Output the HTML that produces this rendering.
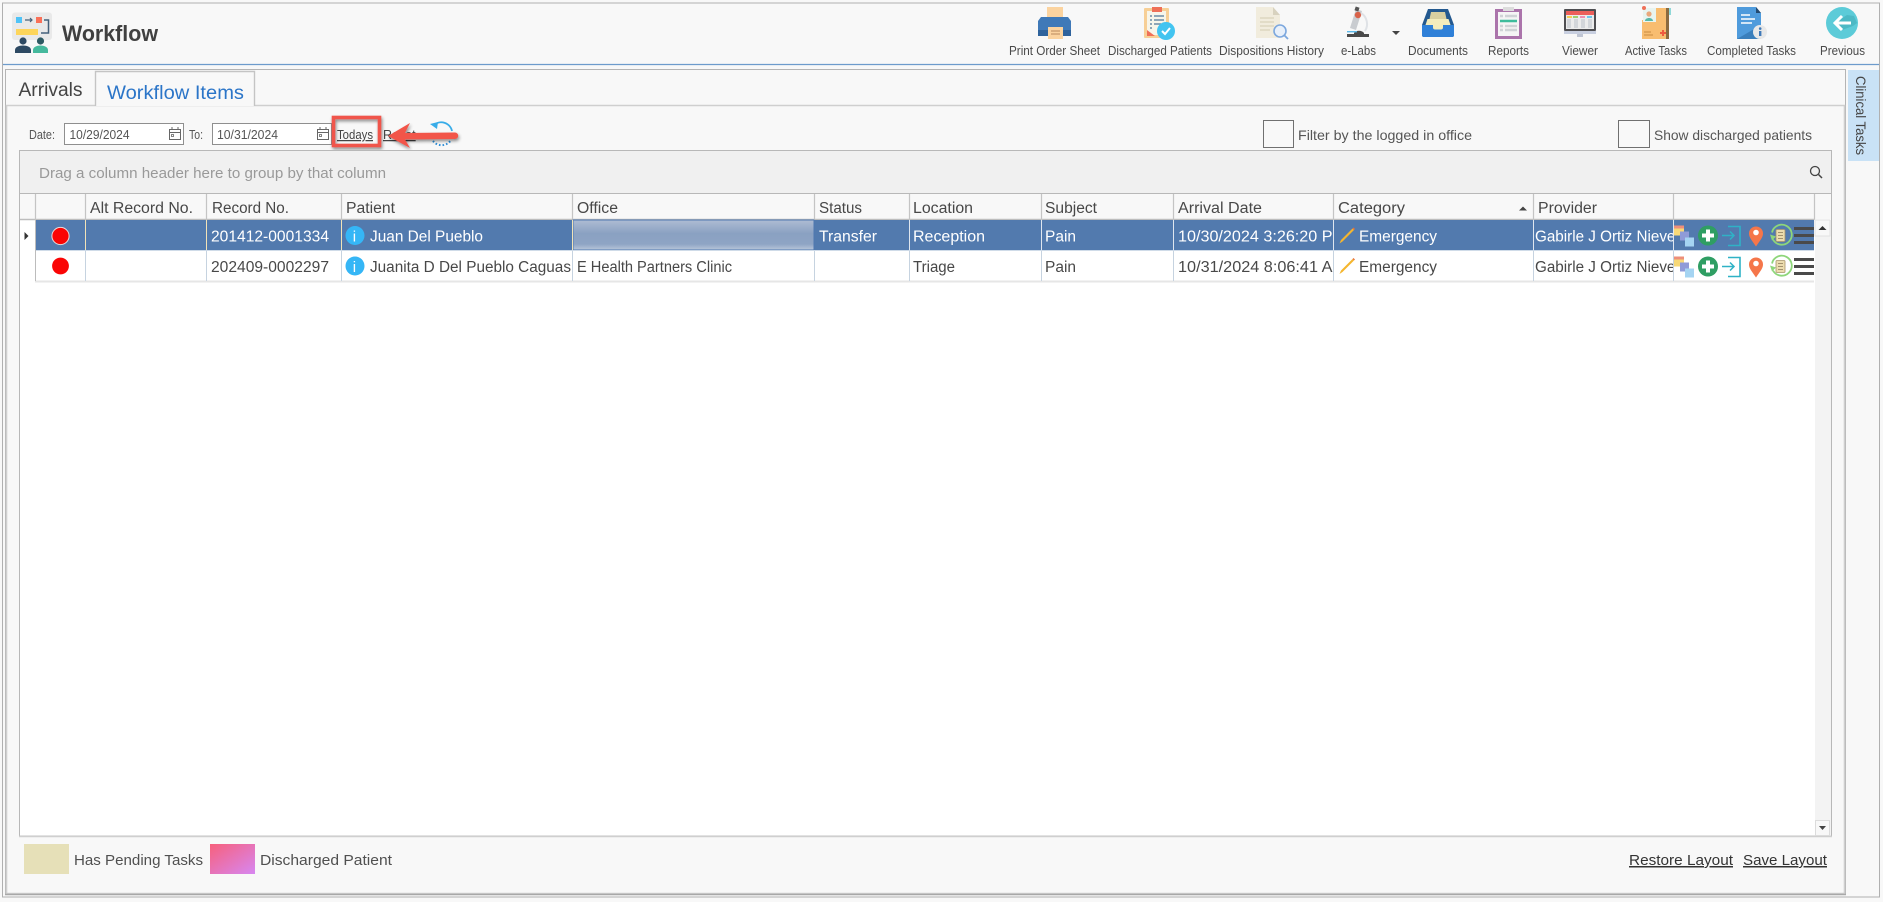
<!DOCTYPE html>
<html><head><meta charset="utf-8"><title>Workflow</title>
<style>
html,body{margin:0;padding:0;background:#f8f8f8;width:1883px;height:902px;overflow:hidden}
svg{display:block}
text{font-family:"Liberation Sans",sans-serif;fill:#444}
.tb{font-size:12.5px;fill:#4a4a4a}
.f{font-size:12.5px;fill:#555}
.c{font-size:14px;fill:#555}
.h{font-size:15.5px;fill:#484848}
.r{font-size:15.5px;fill:#484848}
.w{font-size:15.5px;fill:#fff}
.l{font-size:15px;fill:#505050}
</style></head><body>
<svg width="1883" height="902" viewBox="0 0 1883 902" xmlns="http://www.w3.org/2000/svg">
<defs>
<linearGradient id="pink" x1="0" y1="0" x2="1" y2="1"><stop offset="0" stop-color="#f7607c"/><stop offset="1" stop-color="#d787f2"/></linearGradient>
<linearGradient id="off" x1="0" y1="0" x2="0" y2="1"><stop offset="0" stop-color="#aebcd3"/><stop offset=".45" stop-color="#8aa1c2"/><stop offset=".8" stop-color="#8ea4c4"/><stop offset="1" stop-color="#b9c6da"/></linearGradient>
<filter id="sh" x="-20%" y="-40%" width="140%" height="200%"><feDropShadow dx="1" dy="2" stdDeviation="1.5" flood-color="#000" flood-opacity=".45"/></filter>
<clipPath id="cArr"><rect x="1174" y="215" width="159" height="70"/></clipPath>
<clipPath id="cPro"><rect x="1534" y="215" width="139" height="70"/></clipPath>
<g id="acts">
 <rect x="1674" y="-10" width="10" height="10" fill="#f7d978"/><rect x="1674" y="-10" width="10" height="3" fill="#ee8f7a"/>
 <rect x="1680" y="-4" width="9" height="9" fill="#8f9bd8"/><rect x="1685" y="2" width="9" height="9" fill="#a5d4f2"/>
 <circle cx="1708" cy="0" r="10" fill="#2f9e63"/><path d="M1708 -6v12M1702 0h12" stroke="#fff" stroke-width="4"/>
 <path d="M1728 -9h12v19h-12" fill="none" stroke="#2fb2c6" stroke-width="1.6"/><path d="M1722 0h12M1730 -4l4 4-4 4" fill="none" stroke="#2fb2c6" stroke-width="1.5"/>
 <path d="M1756 11c-4-6-7-9-7-13a7 7 0 0 1 14 0c0 4-3 7-7 13z" fill="#f5764a"/><circle cx="1756" cy="-3" r="2.8" fill="#fff"/>
 <path d="M1773 4a10 10 0 1 0 -1-7" fill="none" stroke="#8ed67a" stroke-width="1.8"/><path d="M1770 -1l2 6 4-4z" fill="#8ed67a"/>
 <rect x="1776" y="-6" width="9" height="12" rx="1" fill="#ecdcae" stroke="#a8946a" stroke-width=".8"/><path d="M1778 -3h5M1778 0h5M1778 3h5" stroke="#8a7a5a" stroke-width=".8"/>
 <path d="M1794 -7h20M1794 0h20M1794 7h20" stroke="#4a4a4a" stroke-width="3"/>
</g>
<g id="cal"><rect x=".5" y="2.5" width="11" height="10" fill="none" stroke="#666"/><path d="M0 5.5h12M3 0v3M9 0v3" stroke="#666"/><rect x="2.5" y="7.5" width="2" height="2" fill="none" stroke="#666" stroke-width=".8"/></g>
</defs>

<rect width="1883" height="902" fill="#f8f8f8"/>
<!-- outer frame -->
<path d="M2.5 3H1879.5V897H2.5Z" fill="none" stroke="#b0b0b0"/>
<path d="M3 64.5H1879" stroke="#6d9bcc" stroke-width="1.2"/>

<!-- logo -->
<rect x="12" y="12.500" width="40" height="27.500" rx="3" fill="#e9e9e9"/>
<rect x="16" y="17" width="6" height="6" fill="#4fc3f7"/><rect x="36" y="17" width="6" height="6" fill="#f97058"/>
<path d="M25 20h7M30 18l2 2-2 2" stroke="#44607a" stroke-width="1.2" fill="none"/>
<rect x="16" y="29" width="22" height="6" fill="#fdd55a"/>
<path d="M44 20h4.500v13H41" stroke="#44607a" stroke-width="1.500" fill="none"/>
<circle cx="23" cy="41" r="3.600" fill="#2e4a63"/><path d="M15 53v-3c0-3 4-4.500 8-4.500s8 1.500 8 4.500v3z" fill="#2e4a63"/>
<circle cx="40.500" cy="41" r="3.600" fill="#2e5a63"/><path d="M33 53v-3c0-3 4-4.500 7.500-4.500s7.500 1.500 7.500 4.500v3z" fill="#46b99d"/>
<text x="62" y="41" font-size="22" font-weight="bold" style="fill:#404040" textLength="96" lengthAdjust="spacingAndGlyphs">Workflow</text>

<!-- printer -->
<rect x="1047" y="7" width="16" height="13" fill="#fbd39f"/>
<path d="M1041 17h27l3 4v13a2 2 0 0 1-2 2h-29a2 2 0 0 1-2-2V21z" fill="#3f79b8"/><rect x="1038" y="30" width="33" height="6" fill="#2f639c"/>
<rect x="1048" y="27" width="15" height="12" fill="#fbd39f"/><path d="M1051 31h9M1051 34h9" stroke="#b98a5c"/>
<!-- discharged -->
<rect x="1144" y="8" width="25" height="30" rx="1" fill="#f7cf96"/><rect x="1147" y="11" width="19" height="24" fill="#f7f5ea"/>
<rect x="1152" y="7" width="10" height="5" fill="#ef7058"/>
<path d="M1150 16h2M1154 16h10M1150 20h2M1154 20h10M1150 24h2M1154 24h7M1150 28h2" stroke="#6d8ca6" stroke-width="1.6"/>
<path d="M1147 30l8 6h-8z" fill="#ef7058"/>
<circle cx="1166" cy="31" r="9" fill="#43c4f0"/><path d="M1162 31l3 3 5-6" stroke="#fff" stroke-width="2" fill="none"/>
<!-- dispositions -->
<path d="M1256 7h17l7 8v23h-24z" fill="#f1ecdd"/><path d="M1273 7l7 8h-7z" fill="#d8d2bf"/>
<path d="M1260 18h14M1260 22h14M1260 26h14M1260 30h10" stroke="#ddd6c0" stroke-width="1.4"/>
<circle cx="1280" cy="31" r="6" fill="#e8f0fa" stroke="#7da8de" stroke-width="1.6"/><path d="M1284 35l4 4" stroke="#7da8de" stroke-width="1.8"/>
<!-- microscope -->
<path d="M1356 9l6 2-6 19-6-2z" fill="#c9ccd0"/><rect x="1355" y="7" width="4" height="4" fill="#555" transform="rotate(18 1357 9)"/><circle cx="1358" cy="15" r="3.200" fill="#d9634a"/>
<path d="M1361 13a13 13 0 0 1 4 18" fill="none" stroke="#dfe2e6" stroke-width="2"/>
<path d="M1354 33c2-3 8-3 10 0v1h-10z" fill="#4a4a4a"/>
<rect x="1347" y="31" width="10" height="1.400" fill="#5bb8e8"/><rect x="1347" y="34" width="22" height="3" fill="#4a4a4a"/>
<path d="M1392 31h8l-4 4z" fill="#444"/>
<!-- documents -->
<path d="M1428 9h20l6 16v10a2 2 0 0 1-2 2h-28a2 2 0 0 1-2-2V25z" fill="#24598f"/>
<path d="M1431 12h14l1.500 7h-17z" fill="#d8cfa0"/>
<path d="M1427.500 19h21l2 6h-25z" fill="#f3ecbc"/>
<path d="M1422 25h11v2.500a2 2 0 0 0 2 2h6a2 2 0 0 0 2-2V25h11v10a2 2 0 0 1-2 2h-28a2 2 0 0 1-2-2z" fill="#2f80d8"/>
<path d="M1433 25h10v2.500a2 2 0 0 1-2 2h-6a2 2 0 0 1-2-2z" fill="#f3ecbc"/>
<!-- reports -->
<rect x="1495" y="9" width="27" height="30" fill="#ab74ab"/><rect x="1498" y="12" width="21" height="24" fill="#f5f5f5"/>
<rect x="1503" y="7" width="11" height="4" fill="#dcdcdc"/>
<path d="M1500 16h3M1505 16h12M1500 30h3M1505 30h12M1500 26h3" stroke="#cfd3d6" stroke-width="2.4"/><path d="M1505 26h12" stroke="#cfd3d6" stroke-width="2.4"/>
<path d="M1500 21h17" stroke="#3fbc9c" stroke-width="2.6"/>
<!-- viewer -->
<rect x="1564" y="9" width="32" height="22" rx="1" fill="#4f4f52"/><rect x="1566" y="11" width="28" height="18" fill="#ececec"/>
<rect x="1566" y="11" width="28" height="4" fill="#ec5f5a"/><rect x="1567" y="16" width="5" height="2" fill="#f6cf55"/><rect x="1573" y="16" width="5" height="2" fill="#9fd06e"/><rect x="1580" y="16" width="5" height="2" fill="#ee8fb0"/><rect x="1587" y="16" width="5" height="2" fill="#6fc7ea"/>
<path d="M1569 19v9M1576 19v9M1583 19v9M1590 19v9" stroke="#d3d6da" stroke-width="4"/>
<rect x="1564" y="31" width="32" height="3" fill="#c8cfe0"/><rect x="1577" y="34" width="6" height="3" fill="#c0c6d4"/>
<!-- active tasks -->
<path d="M1642 20h25v19h-25z" fill="#f8bd70"/><path d="M1656 8h11v14h-11z" fill="#f8bd70"/><rect x="1666" y="8" width="3" height="31" fill="#8a6a40"/><rect x="1669" y="8" width="2" height="7" fill="#8fd8d8"/>
<rect x="1643" y="8" width="13" height="14" fill="#e8f4f0"/><circle cx="1649" cy="14" r="2.6" fill="#eaa87c"/><path d="M1645 21c0-4 8-4 8 0z" fill="#58b8a8"/><circle cx="1644" cy="8" r="2" fill="#ef7058"/>
<path d="M1660 33h6M1663 30v6" stroke="#ef5a3e" stroke-width="2"/><path d="M1644 32h7M1644 35h9" stroke="#c98a40"/>
<!-- completed -->
<path d="M1737 7h19l5 6v26h-24z" fill="#4f9bdc"/><path d="M1756 7l5 6h-5z" fill="#244a70"/><path d="M1737 39l24-14v14z" fill="#3a7fbc"/>
<path d="M1741 15h9M1741 19h14M1741 23h11" stroke="#fff" stroke-width="1.5"/>
<circle cx="1760" cy="32" r="7" fill="#e8e8e8"/><rect x="1759" y="31" width="2.4" height="5" fill="#3f79b8"/><circle cx="1760.2" cy="28.6" r="1.3" fill="#3f79b8"/>
<!-- previous -->
<circle cx="1842" cy="23" r="16" fill="#5ccbd8"/><path d="M1835 23l7 7 11-4 4-3-3-7-7-1z" fill="#49b4c0" opacity=".8"/>
<path d="M1851 23h-16M1842 16l-7 7 7 7" stroke="#fff" stroke-width="3" fill="none"/>

<text class="tb" x="1009" y="55" textLength="91" lengthAdjust="spacingAndGlyphs">Print Order Sheet</text>
<text class="tb" x="1108" y="55" textLength="104" lengthAdjust="spacingAndGlyphs">Discharged Patients</text>
<text class="tb" x="1219" y="55" textLength="105" lengthAdjust="spacingAndGlyphs">Dispositions History</text>
<text class="tb" x="1341" y="55" textLength="35" lengthAdjust="spacingAndGlyphs">e-Labs</text>
<text class="tb" x="1408" y="55" textLength="60" lengthAdjust="spacingAndGlyphs">Documents</text>
<text class="tb" x="1488" y="55" textLength="41" lengthAdjust="spacingAndGlyphs">Reports</text>
<text class="tb" x="1562" y="55" textLength="36" lengthAdjust="spacingAndGlyphs">Viewer</text>
<text class="tb" x="1625" y="55" textLength="62" lengthAdjust="spacingAndGlyphs">Active Tasks</text>
<text class="tb" x="1707" y="55" textLength="89" lengthAdjust="spacingAndGlyphs">Completed Tasks</text>
<text class="tb" x="1820" y="55" textLength="45" lengthAdjust="spacingAndGlyphs">Previous</text>

<!-- main panel -->
<path d="M5.5 894V69.5H1845.5V894Z" fill="#f8f8f8" stroke="#b4b4b4"/>
<path d="M6.5 893.5V105.5H1844.5V893.5Z" fill="#f8f8f8" stroke="#cfcfcf" stroke-width="1.6"/>
<path d="M95.5 106V71.5H254.5V106" fill="#f8f8f8" stroke="#c4c4c4" stroke-width="1.4"/>
<path d="M5 894.5H1846" stroke="#a8a8a8" stroke-width="1.6"/>
<text x="18.5" y="96" font-size="19" textLength="64" lengthAdjust="spacingAndGlyphs">Arrivals</text>
<text x="107" y="99" font-size="19" style="fill:#2b75c8" textLength="137" lengthAdjust="spacingAndGlyphs">Workflow Items</text>

<!-- clinical tab -->
<rect x="1848" y="70" width="31" height="91" fill="#c9e2f6"/>
<text transform="translate(1856 76) rotate(90)" font-size="14" textLength="79" lengthAdjust="spacingAndGlyphs">Clinical Tasks</text>

<!-- filter bar -->
<text class="f" x="29" y="139" textLength="26" lengthAdjust="spacingAndGlyphs">Date:</text>
<rect x="64.5" y="123.5" width="119" height="21" fill="#fff" stroke="#8f8f8f"/>
<text class="f" x="69.5" y="139" textLength="60" lengthAdjust="spacingAndGlyphs">10/29/2024</text>
<use href="#cal" x="169" y="127"/>
<text class="f" x="189" y="139" textLength="14" lengthAdjust="spacingAndGlyphs">To:</text>
<rect x="212.5" y="123.5" width="119" height="21" fill="#fff" stroke="#8f8f8f"/>
<text class="f" x="217" y="139" textLength="61" lengthAdjust="spacingAndGlyphs">10/31/2024</text>
<use href="#cal" x="317" y="127"/>
<text class="f" x="337" y="139" style="fill:#444" text-decoration="underline" textLength="36" lengthAdjust="spacingAndGlyphs">Todays</text>
<text class="f" x="383" y="139" style="fill:#444" text-decoration="underline">Reset</text>
<rect x="333.5" y="117.5" width="46" height="28" fill="none" stroke="#f0544c" stroke-width="3.6" filter="url(#sh)"/>
<path d="M434 125a11 11 0 0 1 18 6" fill="none" stroke="#38ace8" stroke-width="1.8"/><path d="M430 124l8-2-1 7z" fill="#38ace8"/>
<path d="M433 141a11 11 0 0 0 18-1" fill="none" stroke="#2f8fd8" stroke-width="2" stroke-dasharray="1.6 2"/>
<path d="M388 136l22-13-5 10 50-.5a3 3 0 0 1 0 6.500l-50 .5 5 8.500z" fill="#f2544a" filter="url(#sh)"/>

<rect x="1263.5" y="120.5" width="30" height="27" fill="#f8f8f8" stroke="#707070"/>
<text class="c" x="1298" y="140" textLength="174" lengthAdjust="spacingAndGlyphs">Filter by the logged in office</text>
<rect x="1618.5" y="120.5" width="31" height="27" fill="#f8f8f8" stroke="#707070"/>
<text class="c" x="1654" y="140" textLength="158" lengthAdjust="spacingAndGlyphs">Show discharged patients</text>

<!-- grid -->
<rect x="19.5" y="150.5" width="1812" height="685.5" fill="#fff" stroke="#b8b8b8"/>
<path d="M19 836.5H1832" stroke="#cfcfcf" stroke-width="1.6"/>
<rect x="20" y="151" width="1811" height="42" fill="#f0f0f0"/>
<path d="M20 193.5H1832" stroke="#b8b8b8"/>
<text x="39" y="178" font-size="14.5" style="fill:#999" textLength="347" lengthAdjust="spacingAndGlyphs">Drag a column header here to group by that column</text>
<circle cx="1815" cy="171" r="4.5" fill="none" stroke="#444" stroke-width="1.3"/><path d="M1818.5 174.5l3.5 3.5" stroke="#444" stroke-width="1.5"/>

<!-- header -->
<rect x="20" y="194" width="1811" height="25" fill="#f8f8f8"/>
<path d="M20 219.5H1814" stroke="#bdbdbd" stroke-width="1.6"/>
<path d="M35.5 194V220M85.5 194V220M206.5 194V220M341.5 194V220M572.5 194V220M814.5 194V220M909.5 194V220M1041.5 194V220M1173.5 194V220M1333.5 194V220M1533.5 194V220M1673.5 194V220M1814.5 194V220" stroke="#c4c4c4" stroke-width="1.2"/>
<text class="h" x="90" y="213" textLength="103" lengthAdjust="spacingAndGlyphs">Alt Record No.</text>
<text class="h" x="212" y="213" textLength="77" lengthAdjust="spacingAndGlyphs">Record No.</text>
<text class="h" x="346" y="213" textLength="49" lengthAdjust="spacingAndGlyphs">Patient</text>
<text class="h" x="577" y="213" textLength="41" lengthAdjust="spacingAndGlyphs">Office</text>
<text class="h" x="819" y="213" textLength="43" lengthAdjust="spacingAndGlyphs">Status</text>
<text class="h" x="913" y="213" textLength="60" lengthAdjust="spacingAndGlyphs">Location</text>
<text class="h" x="1045" y="213" textLength="52" lengthAdjust="spacingAndGlyphs">Subject</text>
<text class="h" x="1178" y="213" textLength="84" lengthAdjust="spacingAndGlyphs">Arrival Date</text>
<text class="h" x="1338" y="213" textLength="67" lengthAdjust="spacingAndGlyphs">Category</text>
<path d="M1519 210.5h8l-4-4z" fill="#444"/>
<text class="h" x="1538" y="213" textLength="59" lengthAdjust="spacingAndGlyphs">Provider</text>

<!-- rows -->
<rect x="35" y="220" width="1779" height="30" fill="#527aae"/>
<rect x="573" y="220" width="241" height="30" fill="url(#off)" stroke="#4f78b0"/>
<path d="M24.5 232l4 4-4 4z" fill="#333"/>
<path d="M35 250.5H1814" stroke="#cfdbe8" stroke-width="1"/>
<path d="M35 281.5H1814" stroke="#e6e6e6" stroke-width="2"/>
<path d="M35.5 220V281" stroke="#bcbcbc"/>
<path d="M85.5 220V250M206.5 220V250M341.5 220V250M572.5 220V250" stroke="#f1e3b8"/>
<path d="M909.5 220V250M1041.5 220V250M1173.5 220V250M1333.5 220V250M1533.5 220V250M1673.5 220V250" stroke="#dfe6ef"/>
<path d="M85.5 251V281M206.5 251V281M341.5 251V281M572.5 251V281M814.5 251V281M909.5 251V281M1041.5 251V281M1173.5 251V281M1333.5 251V281M1533.5 251V281M1673.5 251V281" stroke="#c6d3e0"/>

<circle cx="60.5" cy="236" r="8.6" fill="#fa0505" stroke="#e9dcdc"/>
<circle cx="60.5" cy="266" r="8.4" fill="#fa0505"/>
<text class="w" x="211" y="241.500" textLength="118" lengthAdjust="spacingAndGlyphs">201412-0001334</text>
<text class="r" x="211" y="272" textLength="118" lengthAdjust="spacingAndGlyphs">202409-0002297</text>
<circle cx="355" cy="235.500" r="9.500" fill="#35b6f6"/><text x="352.800" y="241.500" font-size="15" style="fill:#fff">i</text>
<circle cx="355" cy="266" r="9.5" fill="#35b6f6"/><text x="352.8" y="272" font-size="15" style="fill:#fff">i</text>
<text class="w" x="370" y="241.500" textLength="113" lengthAdjust="spacingAndGlyphs">Juan Del Pueblo</text>
<text class="r" x="370" y="272" textLength="201" lengthAdjust="spacingAndGlyphs">Juanita D Del Pueblo Caguas</text>
<text class="r" x="577" y="272" textLength="155" lengthAdjust="spacingAndGlyphs">E Health Partners Clinic</text>
<text class="w" x="819" y="241.500" textLength="58" lengthAdjust="spacingAndGlyphs">Transfer</text>
<text class="w" x="913" y="241.500" textLength="72" lengthAdjust="spacingAndGlyphs">Reception</text>
<text class="r" x="913" y="272" textLength="42" lengthAdjust="spacingAndGlyphs">Triage</text>
<text class="w" x="1045" y="241.500" textLength="31" lengthAdjust="spacingAndGlyphs">Pain</text>
<text class="r" x="1045" y="272" textLength="31" lengthAdjust="spacingAndGlyphs">Pain</text>
<g clip-path="url(#cArr)">
<text class="w" x="1178" y="241.500" textLength="168" lengthAdjust="spacingAndGlyphs">10/30/2024 3:26:20 PM</text>
<text class="r" x="1178" y="272" textLength="168" lengthAdjust="spacingAndGlyphs">10/31/2024 8:06:41 AM</text>
</g>
<path d="M1339.500 243.500l1.500-3.500 11.500-11.500 1.500 1.500-11.500 11.500z" fill="#f5b62e"/><path d="M1352.500 228.500l1-1 1.500 1.500-1 1z" fill="#e8703a"/>
<path d="M1339.500 274l1.500-3.500 11.500-11.500 1.500 1.500-11.500 11.500z" fill="#f5b62e"/><path d="M1352.500 259l1-1 1.500 1.500-1 1z" fill="#e8703a"/>
<text class="w" x="1359" y="241.500" textLength="78" lengthAdjust="spacingAndGlyphs">Emergency</text>
<text class="r" x="1359" y="272" textLength="78" lengthAdjust="spacingAndGlyphs">Emergency</text>
<g clip-path="url(#cPro)">
<text class="w" x="1535" y="241.500" textLength="148" lengthAdjust="spacingAndGlyphs">Gabirle J Ortiz Nieves</text>
<text class="r" x="1535" y="272" textLength="148" lengthAdjust="spacingAndGlyphs">Gabirle J Ortiz Nieves</text>
</g>
<use href="#acts" x="0" y="235.500"/>
<use href="#acts" x="0" y="266.500"/>

<!-- scrollbar -->
<rect x="1815" y="220" width="16" height="615" fill="#f3f3f3"/>
<rect x="1815" y="220" width="15" height="16" fill="#f8f8f8" stroke="#e2e2e2"/>
<path d="M1818.5 230h8l-4-4z" fill="#333"/>
<rect x="1815.5" y="820.5" width="14" height="15" fill="#f8f8f8" stroke="#dcdcdc"/>
<path d="M1819 826h7l-3.500 4z" fill="#444"/>

<!-- legend -->
<rect x="24" y="844" width="45" height="30" fill="#e6e0b8"/>
<text class="l" x="74" y="865" textLength="129" lengthAdjust="spacingAndGlyphs">Has Pending Tasks</text>
<rect x="210" y="844" width="45" height="30" fill="url(#pink)"/>
<text class="l" x="260" y="865" textLength="132" lengthAdjust="spacingAndGlyphs">Discharged Patient</text>
<text class="l" x="1629" y="865" style="fill:#333" text-decoration="underline" textLength="104" lengthAdjust="spacingAndGlyphs">Restore Layout</text>
<text class="l" x="1743" y="865" style="fill:#333" text-decoration="underline" textLength="84" lengthAdjust="spacingAndGlyphs">Save Layout</text>
</svg>
</body></html>
